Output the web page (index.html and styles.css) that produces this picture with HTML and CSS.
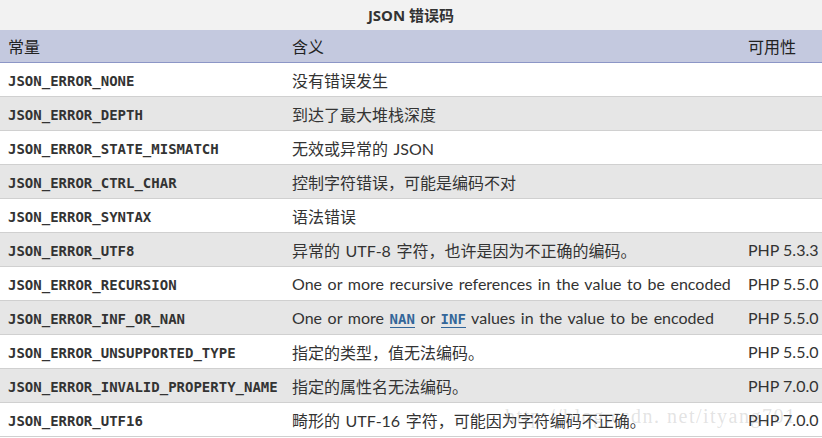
FILE: index.html
```html
<!DOCTYPE html>
<html lang="zh">
<head>
<meta charset="utf-8">
<link rel="stylesheet" href="styles.css">
</head>
<body>
<div class="page">
<table class="errtable">
<caption class="title"><strong>JSON 错误码</strong></caption>
<thead>
<tr><th class="c1">常量</th><th class="c2">含义</th><th class="c3">可用性</th></tr>
</thead>
<tbody>
<tr><td class="c1"><code>JSON_ERROR_NONE</code></td><td class="c2">没有错误发生</td><td class="c3"></td></tr>
<tr><td class="c1"><code>JSON_ERROR_DEPTH</code></td><td class="c2">到达了最大堆栈深度</td><td class="c3"></td></tr>
<tr><td class="c1"><code>JSON_ERROR_STATE_MISMATCH</code></td><td class="c2">无效或异常的 JSON</td><td class="c3"></td></tr>
<tr><td class="c1"><code>JSON_ERROR_CTRL_CHAR</code></td><td class="c2">控制字符错误，可能是编码不对</td><td class="c3"></td></tr>
<tr><td class="c1"><code>JSON_ERROR_SYNTAX</code></td><td class="c2">语法错误</td><td class="c3"></td></tr>
<tr><td class="c1"><code>JSON_ERROR_UTF8</code></td><td class="c2">异常的 UTF-8 字符，也许是因为不正确的编码。</td><td class="c3">PHP 5.3.3</td></tr>
<tr><td class="c1"><code>JSON_ERROR_RECURSION</code></td><td class="c2">One or more recursive references in the value to be encoded</td><td class="c3">PHP 5.5.0</td></tr>
<tr><td class="c1"><code>JSON_ERROR_INF_OR_NAN</code></td><td class="c2">One or more <a class="const">NAN</a> or <a class="const">INF</a> values in the value to be encoded</td><td class="c3">PHP 5.5.0</td></tr>
<tr><td class="c1"><code>JSON_ERROR_UNSUPPORTED_TYPE</code></td><td class="c2">指定的类型，值无法编码。</td><td class="c3">PHP 5.5.0</td></tr>
<tr><td class="c1"><code>JSON_ERROR_INVALID_PROPERTY_NAME</code></td><td class="c2">指定的属性名无法编码。</td><td class="c3">PHP 7.0.0</td></tr>
<tr><td class="c1"><code>JSON_ERROR_UTF16</code></td><td class="c2">畸形的 UTF-16 字符，可能因为字符编码不正确。</td><td class="c3">PHP 7.0.0</td></tr>
</tbody>
</table>
<div class="watermark">http://blog.csdn. net/ityang701</div>
</div>
</body>
</html>
```
FILE: styles.css
```css
html, body {
  margin: 0;
  padding: 0;
  background: #ffffff;
}
.page {
  position: relative;
  width: 822px;
  height: 438px;
  overflow: hidden;
  font-family: "Lato", "Noto Sans CJK SC", sans-serif;
  font-size: 16px;
  color: #333333;
}
.errtable {
  width: 822px;
  border-collapse: collapse;
  border-spacing: 0;
  table-layout: fixed;
}
.title {
  height: 30px;
  line-height: 30px;
  background: #f2f2f2;
  text-align: center;
  font-family: "Noto Sans", "Noto Sans CJK SC", sans-serif;
  font-size: 15px;
  color: #333;
}
.title strong {
  font-weight: bold;
}
thead th {
  height: 32px;
  padding: 0 8px;
  background: #c4c9df;
  border-bottom: 1px solid #8c96c6;
  text-align: left;
  font-weight: normal;
  color: #222;
  font-size: 16px;
  white-space: nowrap;
}
tbody td {
  height: 33px;
  padding: 0 8px;
  border-bottom: 1px solid #d0d0d0;
  vertical-align: middle;
  white-space: nowrap;
}
tbody td.c2 {
  word-spacing: 1.5px;
}
tbody tr:nth-child(even) td {
  background: #e6e6e6;
}
.c1 { width: 268px; }
.c2 { width: 440px; }
.c3 { width: 66px; }
code {
  font-family: "DejaVu Sans Mono", monospace;
  font-weight: bold;
  font-size: 14px;
  color: #333;
}
.const {
  font-family: "DejaVu Sans Mono", monospace;
  font-weight: bold;
  font-size: 14px;
  color: #336699;
  text-decoration: none;
  border-bottom: 1px solid #336699;
  word-spacing: 0;
}
.watermark {
  position: absolute;
  left: 505px;
  top: 405px;
  font-family: "Liberation Serif", serif;
  font-size: 20px;
  color: rgba(160, 160, 160, 0.3);
  letter-spacing: 1.5px;
  white-space: nowrap;
  pointer-events: none;
}
```
